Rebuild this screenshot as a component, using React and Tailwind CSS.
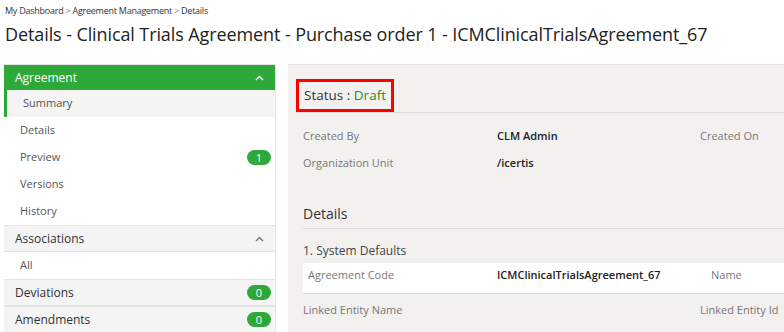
import React from 'react';

const font = { fontFamily: '"Open Sans", "Noto Sans", Arial, sans-serif' };

function ChevronUp({ className }) {
  return (
    <svg width="9" height="6" viewBox="0 0 9 6" className={className}>
      <path d="M1 5 L4.5 1.5 L8 5" fill="none" stroke="currentColor" strokeWidth="1.4" />
    </svg>
  );
}

function Badge({ n }) {
  return (
    <span className="inline-flex items-center justify-center w-[24px] h-[15px] rounded-full bg-[#2fa83a] text-white text-[11px] leading-none">
      {n}
    </span>
  );
}

function NavRow({ label, active, badge }) {
  return (
    <div
      className={`h-[27px] flex items-center justify-between pr-[4px] text-[11px] text-[#555] ${
        active ? 'bg-[#f4f4f4] border-l-[3px] border-[#2fa83a] pl-[16px]' : 'pl-[16px]'
      }`}
    >
      <span>{label}</span>
      {badge !== undefined && <Badge n={badge} />}
    </div>
  );
}

function Section({ label, badge, chevron }) {
  return (
    <div className="h-[27px] flex items-center justify-between pl-[11px] pr-[4px] bg-[#f4f4f4] border-y border-[#e4e4e4] text-[12px] text-[#333]">
      <span>{label}</span>
      {chevron && <ChevronUp className="text-[#777] mr-[7px]" />}
      {badge !== undefined && <Badge n={badge} />}
    </div>
  );
}

function Field({ label, value, bold }) {
  return (
    <>
      <div className="text-[#777]">{label}</div>
      <div className={bold ? 'font-semibold text-[#222]' : 'text-[#222]'}>{value}</div>
    </>
  );
}

export default function App() {
  return (
    <div className="w-[784px] h-[332px] overflow-hidden bg-white" style={font}>
      <div className="px-[5px] pt-[4px]">
        <div className="text-[9px] tracking-[-0.25px] text-[#333] leading-[14px]">
          My Dashboard <span className="text-[#888]">&gt;</span> Agreement Management{' '}
          <span className="text-[#888]">&gt;</span> Details
        </div>
        <h1 className="text-[18px] tracking-[-0.1px] text-[#222] leading-[26px] mt-[3px]">
          Details - Clinical Trials Agreement - Purchase order 1 - ICMClinicalTrialsAgreement_67
        </h1>
      </div>

      <div className="flex mt-[17px] pl-[4px]">
        {/* Sidebar */}
        <div className="w-[272px] shrink-0 border-r border-t border-[#e4e4e4]">
          <div className="h-[25px] bg-[#2fa83a] text-white text-[12px] flex items-center justify-between pl-[11px] pr-[11px]">
            <span>Agreement</span>
            <ChevronUp className="text-white" />
          </div>
          <NavRow label="Summary" active />
          <NavRow label="Details" />
          <NavRow label="Preview" badge={1} />
          <NavRow label="Versions" />
          <NavRow label="History" />
          <Section label="Associations" chevron />
          <NavRow label="All" />
          <Section label="Deviations" badge={0} />
          <Section label="Amendments" badge={0} />
        </div>

        {/* Content */}
        <div className="flex-1 ml-[12px] bg-[#f2f1f0] border-t border-[#e2e2e2] pl-[8px] text-[11px]">
          <div className="flex items-end border-b border-[#dcdcdc] mt-[14px]">
            <div className="border-[3px] border-[#ff0000] px-[5px] h-[33px] flex items-center text-[13.5px] text-[#333]">
              Status :&nbsp;<span className="text-[#2e8b2e]">Draft</span>
            </div>
          </div>

          <div className="grid grid-cols-[194px_203px_1fr] gap-y-[13px] pl-[7px] mt-[16px] leading-[14px]">
            <Field label="Created By" value="CLM Admin" bold />
            <div className="text-[#777]">Created On</div>
            <Field label="Organization Unit" value="/icertis" bold />
            <div />
          </div>

          <div className="ml-[7px] mt-[33px] border-b border-[#dcdcdc] pb-[4px] text-[14px] text-[#333]">
            Details
          </div>

          <div className="ml-[7px] mt-[13px] text-[12px] text-[#444]">1. System Defaults</div>

          <div className="ml-[7px] mt-[3px] h-[31px] bg-white border-b border-[#dcdcdc] grid grid-cols-[189px_214px_1fr] items-center pl-[5px] pb-[5px]">
            <div className="text-[#777]">Agreement Code</div>
            <div className="font-semibold text-[#222]">ICMClinicalTrialsAgreement_67</div>
            <div className="text-[#777]">Name</div>
          </div>

          <div className="ml-[7px] mt-[8px] grid grid-cols-[397px_1fr]">
            <div className="text-[#777]">Linked Entity Name</div>
            <div className="text-[#777]">Linked Entity Id</div>
          </div>
        </div>
      </div>
    </div>
  );
}
